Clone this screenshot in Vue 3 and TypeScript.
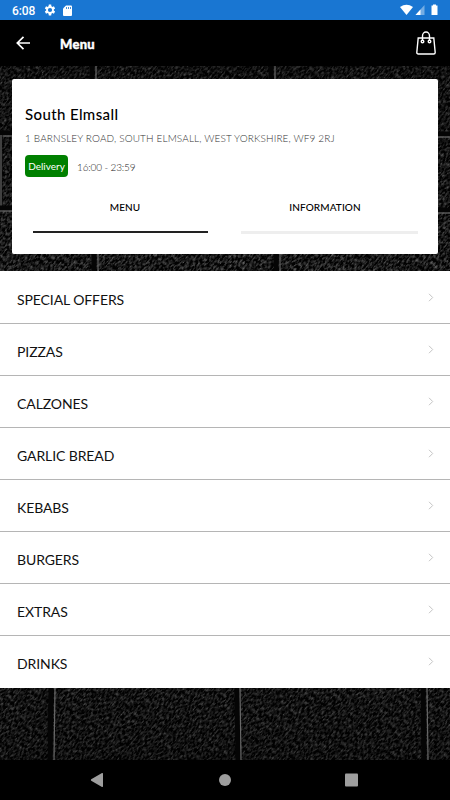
<script setup lang="ts">
import { ref } from 'vue'

type Tab = 'menu' | 'information'
interface Joint { x1: number; y1: number; x2: number; y2: number; dx: number; dy: number }

const activeTab = ref<Tab>('menu')
const categories: string[] = [
  'SPECIAL OFFERS', 'PIZZAS', 'CALZONES', 'GARLIC BREAD',
  'KEBABS', 'BURGERS', 'EXTRAS', 'DRINKS',
]

// Mortar joints: a dark groove with a light edge offset by dx/dy.
const joints: Joint[] = [
  { x1: 92, y1: 0, x2: 92, y2: 13, dx: 4, dy: 0 },
  { x1: 271, y1: 0, x2: 271, y2: 13, dx: 4, dy: 0 },
  { x1: 0, y1: 67, x2: 12, y2: 67, dx: 0, dy: 3 },
  { x1: 0, y1: 69, x2: 0, y2: 142, dx: 1, dy: 0 },
  { x1: 0, y1: 142, x2: 12, y2: 142, dx: 0, dy: 3 },
  { x1: 438, y1: 68, x2: 450, y2: 68, dx: 0, dy: 3 },
  { x1: 438, y1: 144, x2: 450, y2: 144, dx: 0, dy: 3 },
  { x1: 94, y1: 188, x2: 94, y2: 205, dx: 4, dy: 0 },
  { x1: 276, y1: 188, x2: 276, y2: 205, dx: 4, dy: 0 },
  { x1: 51, y1: 622, x2: 50, y2: 694, dx: 4, dy: 0 },
  { x1: 237, y1: 622, x2: 238, y2: 694, dx: 3, dy: 0 },
  { x1: 423, y1: 622, x2: 424, y2: 694, dx: 4, dy: 0 },
]
</script>

<template>
  <div class="screen">
    <div class="status">
      <span class="clock">6:08</span>
      <svg class="gear" width="12" height="12" viewBox="3 2 20 20"><path fill="#fff" d="M19.400 13a7 7 0 0 0 0-2l2.100-1.700-2-3.400-2.500 1a8 8 0 0 0-1.700-1L15 3h-4l-.4 2.900a8 8 0 0 0-1.700 1l-2.500-1-2 3.400L6.600 11a7 7 0 0 0 0 2l-2.200 1.700 2 3.400 2.500-1a8 8 0 0 0 1.700 1L11 21h4l.4-2.900a8 8 0 0 0 1.700-1l2.400 1 2-3.400zM13 8.500a3.500 3.500 0 1 1 0 7 3.500 3.500 0 0 1 0-7z" /></svg>
      <svg class="card-icon" width="9" height="11" viewBox="0 0 9 11"><path fill="#fff" d="M3 .5h5q1 0 1 1v8.500q0 1-1 1H1q-1 0-1-1V3.500z" /><path stroke="#1976d2" stroke-width=".8" d="M3.500 2v2M5.500 2v2M7.500 2v2" /></svg>
      <span class="grow"></span>
      <svg width="38" height="12" viewBox="0 0 38 12">
        <path fill="#fff" d="M0 3Q6.500-1.500 13 3L6.500 11z" />
        <path fill="#75ade4" d="M24.500 1v10h-9z" /><path fill="#fff" d="M20.500 5.500V11h-5z" />
        <path fill="#fff" d="M33 .5h3v1h1.500V11h-6V1.500H33z" />
      </svg>
    </div>
    <header class="topbar">
      <svg width="14" height="14" viewBox="0 0 14 14"><path fill="none" stroke="#fff" stroke-width="1.700" d="M14 7H1.500M7.500.8L1.300 7l6.200 6.200" /></svg>
      <h1>Menu</h1>
      <span class="grow"></span>
      <svg width="20" height="24" viewBox="0 0 20 24"><g fill="none" stroke="#fff" stroke-width="1.400"><path d="M2.200 7h15.600l1.400 14.500q0 1.500-1.500 1.500H2.300Q.8 23 .8 21.500zM6.500 10V5a3.500 4 0 0 1 7 0v5" /><circle cx="6.500" cy="10.500" r="1.300" /><circle cx="13.500" cy="10.500" r="1.300" /></g></svg>
    </header>
    <div class="body">
      <svg class="wall" width="450" height="694" viewBox="0 0 450 694">
        <defs>
          <filter id="stone" x="0" y="0" width="100%" height="100%" color-interpolation-filters="sRGB">
            <feTurbulence type="fractalNoise" baseFrequency="0.28 0.62" numOctaves="3" seed="8" result="n" />
            <feColorMatrix in="n" type="matrix" values="1.100 0 0 0 -.44  1.100 0 0 0 -.44  1.100 0 0 0 -.44  0 0 0 0 1" />
          </filter>
          <linearGradient id="shade" x2="0" y2="1"><stop offset="0" stop-opacity=".3" /><stop offset=".12" stop-opacity=".2" /><stop offset=".25" stop-opacity="0" /><stop offset=".85" stop-opacity=".15" /><stop offset="1" stop-opacity=".35" /></linearGradient>
        </defs>
        <rect width="450" height="694" fill="#0b0b0b" />
        <g transform="rotate(-50 225 347)"><rect x="-225" y="-103" width="900" height="900" filter="url(#stone)" opacity=".8" /></g>
        <rect width="450" height="694" fill="url(#shade)" />
        <g v-for="(j, i) in joints" :key="i">
          <line :x1="j.x1" :y1="j.y1" :x2="j.x2" :y2="j.y2" stroke="#050505" stroke-width="5" />
          <line :x1="j.x1 + j.dx" :y1="j.y1 + j.dy" :x2="j.x2 + j.dx" :y2="j.y2 + j.dy" stroke="#686868" stroke-width="1.200" />
        </g>
      </svg>
      <main class="content">
        <section class="store">
          <h2>South Elmsall</h2>
          <p class="address">1 BARNSLEY ROAD, SOUTH ELMSALL, WEST YORKSHIRE, WF9 2RJ</p>
          <div class="hours"><span class="badge">Delivery</span><span class="time">16:00 - 23:59</span></div>
          <div class="tabs">
            <button :class="['tab', { active: activeTab === 'menu' }]" @click="activeTab = 'menu'">MENU</button>
            <button :class="['tab', { active: activeTab === 'information' }]" @click="activeTab = 'information'">INFORMATION</button>
          </div>
        </section>
        <ul class="categories">
          <li v-for="category in categories" :key="category">
            <span>{{ category }}</span>
            <svg width="6" height="9" viewBox="0 0 6 9"><path fill="none" stroke="#c4c4c4" d="M1 .8L4.700 4.500 1 8.200" /></svg>
          </li>
        </ul>
      </main>
    </div>
    <nav class="navbar">
      <svg width="450" height="40" viewBox="0 0 450 40" fill="#9e9e9e"><path d="M91.200 19.300L102 13q1-.3 1 .7v12.600q0 1-1 .7l-10.800-6.300q-.8-.7 0-1.400z" /><circle cx="225" cy="20" r="6" /><rect x="345" y="13.500" width="13" height="13" rx="1" /></svg>
    </nav>
  </div>
</template>

<style>
body { margin: 0; }
</style>
<style scoped>
.screen { width: 450px; height: 800px; display: flex; flex-direction: column; overflow: hidden; background: #000; font-family: Lato, "Open Sans", sans-serif; }
.status { height: 20px; box-sizing: border-box; flex: none; display: flex; align-items: center; padding: 0 12px 0 12px; background: #1976d2; color: #fff; }
.clock { font: 500 12px/20px Roboto, sans-serif; letter-spacing: -.1px; width: 32px; margin-top: 1px; }
.card-icon { margin-left: 7px; }
.grow { flex: 1; }
.topbar { height: 46px; box-sizing: border-box; flex: none; display: flex; align-items: center; padding: 0 14px 0 16px; color: #fff; }
h1 { font-size: 13px; font-weight: 900; line-height: 18px; margin: 1px 0 0 30px; letter-spacing: .25px; -webkit-text-stroke: .4px #fff; }
.body { display: grid; height: 694px; flex: none; }
.wall, .content { grid-area: 1 / 1; }
.wall { display: block; }
.content { z-index: 1; }
.store { box-sizing: border-box; height: 175px; margin: 13px 12px 17px; padding: 25px 13px 0; background: #fff; border-radius: 2px; }
h2 { margin: 0; font-size: 15px; line-height: 20px; font-weight: 500; letter-spacing: .38px; color: #000; }
.address { margin: 7px 0 0; font-size: 10px; line-height: 14px; font-weight: 300; letter-spacing: .13px; color: #333; white-space: nowrap; }
.hours { display: flex; align-items: center; gap: 9px; margin-top: 10px; }
.badge { width: 43px; height: 22px; line-height: 23px; border-radius: 4px; background: #008000; color: #fff; font-size: 10px; text-align: center; letter-spacing: 0; }
.time { font-size: 10px; line-height: 14px; font-weight: 300; letter-spacing: -.15px; color: #222; padding-top: 2px; }
.tabs { display: grid; grid-template-columns: 175px 177px; align-items: start; gap: 33px; margin: 16px 0 0 8px; }
.tab { border: 0; border-bottom: 3px solid #eee; background: none; height: 41px; padding: 0 9px 10px 0; font: 500 10px/14px Lato, sans-serif; letter-spacing: .1px; color: #000; text-align: center; }
.tab.active { border-bottom: 2px solid #222; height: 40px; padding: 0 0 10px 9px; }
.categories { margin: 0; padding: 1px 0 0; box-sizing: border-box; list-style: none; background: #fff; height: 417px; display: grid; grid-template-rows: repeat(8, 52px); }
li { display: flex; align-items: center; justify-content: space-between; box-sizing: border-box; padding: 3px 16px 0 17px; font-size: 14px; letter-spacing: -.1px; color: #111; border-bottom: 1px solid #b5b5b5; }
li:last-child { border-bottom: 0; }
li svg { margin-top: -4px; }
.navbar { height: 40px; flex: none; background: #000; }
.navbar svg { display: block; }
</style>
